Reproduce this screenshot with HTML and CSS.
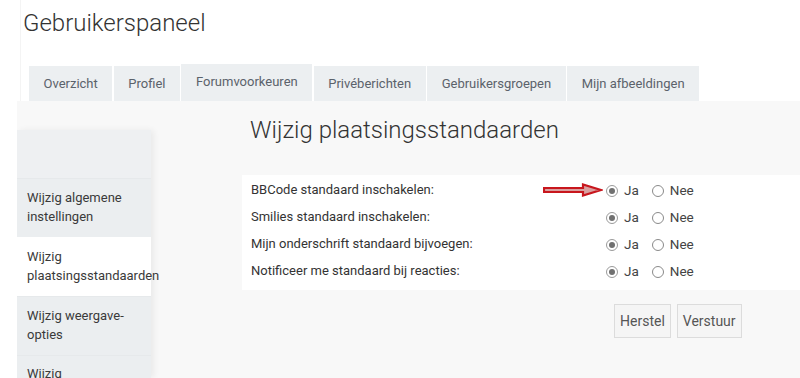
FILE: index.html
```html
<!DOCTYPE html>
<html lang="nl">
<head>
<meta charset="utf-8">
<title>Gebruikerspaneel</title>
<link rel="stylesheet" href="styles.css">
</head>
<body>
<div class="page">
  <h1 class="title">Gebruikerspaneel</h1>
  <nav class="tabs">
    <a class="tab">Overzicht</a>
    <a class="tab">Profiel</a>
    <a class="tab active">Forumvoorkeuren</a>
    <a class="tab">Privéberichten</a>
    <a class="tab">Gebruikersgroepen</a>
    <a class="tab">Mijn afbeeldingen</a>
  </nav>
  <div class="content">
    <aside class="sidebar">
      <div class="side-top"></div>
      <a class="side-item">Wijzig algemene instellingen</a>
      <a class="side-item active">Wijzig plaatsingsstandaarden</a>
      <a class="side-item">Wijzig weergave-opties</a>
      <a class="side-item last">Wijzig bladwijzerinstellingen</a>
    </aside>
    <main class="main">
      <h2 class="heading">Wijzig plaatsingsstandaarden</h2>
      <div class="panel">
        <div class="row">
          <span class="label">BBCode standaard inschakelen:</span>
          <span class="opts">
            <svg class="arrow" width="60" height="14" viewBox="0 0 60 14"><path d="M1 5 H40 V1.5 L58 7 L40 12.5 V9 H1 Z" fill="#d9a0a0" stroke="#c8161d" stroke-width="2.2" stroke-linejoin="miter"/></svg>
            <span class="radio checked"></span><span class="opt">Ja</span>
            <span class="radio"></span><span class="opt">Nee</span>
          </span>
        </div>
        <div class="row">
          <span class="label">Smilies standaard inschakelen:</span>
          <span class="opts"><span class="radio checked"></span><span class="opt">Ja</span><span class="radio"></span><span class="opt">Nee</span></span>
        </div>
        <div class="row">
          <span class="label">Mijn onderschrift standaard bijvoegen:</span>
          <span class="opts"><span class="radio checked"></span><span class="opt">Ja</span><span class="radio"></span><span class="opt">Nee</span></span>
        </div>
        <div class="row">
          <span class="label">Notificeer me standaard bij reacties:</span>
          <span class="opts"><span class="radio checked"></span><span class="opt">Ja</span><span class="radio"></span><span class="opt">Nee</span></span>
        </div>
      </div>
      <div class="buttons">
        <button class="btn">Herstel</button>
        <button class="btn">Verstuur</button>
      </div>
    </main>
  </div>
</div>
</body>
</html>
```
FILE: styles.css
```css
html, body {
  margin: 0;
  padding: 0;
  background: #fff;
  height: 378px;
  overflow: hidden;
}
body {
  font-family: Roboto, "Liberation Sans", Arial, sans-serif;
  color: #333;
}
.page {
  margin-left: 20px;
  border-left: 1px solid #f4f4f4;
  height: 378px;
  display: flex;
  flex-direction: column;
}
.title {
  flex-shrink: 0;
  margin: 0;
  padding: 9px 0 0 2px;
  height: 66px;
  box-sizing: border-box;
  font-size: 24px;
  font-weight: 300;
  color: #333;
  line-height: 28px;
}
.tabs {
  flex-shrink: 0;
  display: flex;
  gap: 1.5px;
  margin-left: 8px;
  height: 35px;
  align-items: flex-end;
}
.tab {
  display: flex;
  align-items: center;
  height: 35px;
  padding: 0 14.5px;
  background: #eceff1;
  font-size: 13px;
  color: #5b626b;
  box-sizing: border-box;
}
.tab.active {
  height: 37px;
  padding-bottom: 3px;
}
.content {
  flex: 1 1 0;
  min-height: 0;
  overflow: hidden;
  margin-left: -4px;
  background: #f8f8f8;
  display: flex;
}
.sidebar {
  flex-shrink: 0;
  margin-top: 29px;
  width: 134px;
  background: #eceff1;
  box-shadow: 3px 0 6px rgba(0, 0, 0, 0.06);
  border-radius: 3px 3px 0 0;
  display: flex;
  flex-direction: column;
}
.side-top {
  flex-shrink: 0;
  height: 48px;
  background: #eef0f2;
}
.side-item {
  flex-shrink: 0;
  display: block;
  height: 59px;
  box-sizing: border-box;
  padding: 9px 10px 0 10px;
  font-size: 13px;
  line-height: 19px;
  color: #3a3a3a;
  background: #ebeef0;
  border-top: 1px solid #e6e9eb;
}
.side-item.active {
  background: #fff;
  border-top-color: #fff;
}
.side-item.last {
  padding-top: 8px;
}
.main {
  margin-left: 91px;
  flex: 1;
  display: flex;
  flex-direction: column;
}
.heading {
  flex-shrink: 0;
  margin: 0;
  padding: 15px 0 0 8px;
  height: 74px;
  box-sizing: border-box;
  font-size: 24px;
  font-weight: 300;
  color: #333;
  line-height: 28px;
}
.panel {
  flex-shrink: 0;
  background: #fff;
  padding: 1px 0 6px 9px;
  height: 115px;
  box-sizing: border-box;
}
.row {
  display: flex;
  align-items: center;
  height: 27px;
  font-size: 13px;
  color: #333;
}
.label {
  width: 355px;
}
.opts {
  position: relative;
  display: flex;
  align-items: center;
}
.radio {
  width: 12px;
  height: 12px;
  border: 1px solid #8a8a8a;
  border-radius: 50%;
  box-sizing: border-box;
  background: #fff;
  margin-top: 3px;
  position: relative;
}
.radio.checked {
  border-color: #9a9a9a;
}
.radio.checked::after {
  content: "";
  position: absolute;
  left: 2px;
  top: 2px;
  width: 6px;
  height: 6px;
  border-radius: 50%;
  background: #707070;
}
.opt {
  margin-left: 6px;
  margin-right: 13px;
  font-size: 13.5px;
  color: #444;
}
.arrow {
  position: absolute;
  left: -63px;
  top: 1px;
}
.buttons {
  flex-shrink: 0;
  display: flex;
  gap: 6px;
  margin-top: 14px;
  margin-left: 372px;
}
.btn {
  height: 34px;
  padding: 0 5px;
  font-family: Roboto, "Liberation Sans", Arial, sans-serif;
  font-size: 14px;
  color: #555;
  background: #f5f5f5;
  border: 1px solid #dcdcdc;
  border-radius: 0;
}
```
